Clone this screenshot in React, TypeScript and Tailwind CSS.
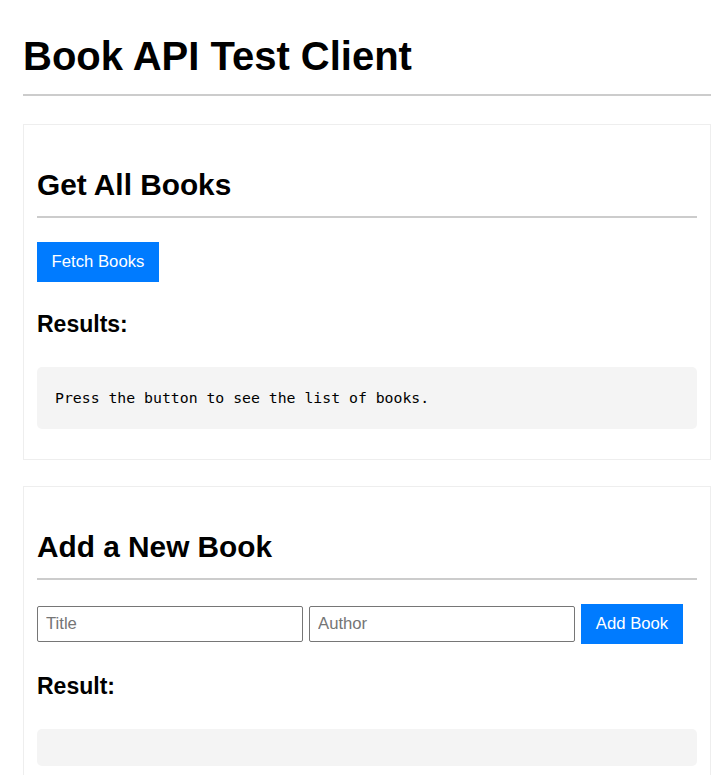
export default function App() {
  return (
    <div className="min-h-screen bg-white pt-[34px] pl-[23px] pr-[6px] text-black font-['Liberation_Sans',Arial,sans-serif]">
      <h1 className="text-[40px] leading-[44px] font-bold pb-[16px] border-b-2 border-[#ccc]">
        Book API Test Client
      </h1>

      <section className="mt-[28px] border border-[#eee] px-[13px] pt-[44px] pb-[30px]">
        <h2 className="text-[29.8px] leading-[32px] font-bold pb-[15px] border-b-2 border-[#ccc]">
          Get All Books
        </h2>
        <button className="mt-[24px] h-[40px] w-[122px] bg-[#007bff] text-white text-[16.7px]">
          Fetch Books
        </button>
        <h3 className="mt-[29px] text-[23px] leading-[26px] font-bold">Results:</h3>
        <pre className="mt-[30px] bg-[#f4f4f4] rounded-[5px] px-[18px] py-[22px] text-[14.8px] leading-[18px] font-['DejaVu_Sans_Mono',monospace]">
          Press the button to see the list of books.
        </pre>
      </section>

      <section className="mt-[26px] border border-[#eee] px-[13px] pt-[44px] pb-[30px]">
        <h2 className="text-[29.8px] leading-[32px] font-bold pb-[15px] border-b-2 border-[#ccc]">
          Add a New Book
        </h2>
        <div className="mt-[24px] flex items-center gap-[6px]">
          <input
            placeholder="Title"
            className="w-[266px] h-[36px] border border-[#767676] rounded-[2px] px-[8px] text-[16.7px] placeholder:text-[#757575] outline-none"
          />
          <input
            placeholder="Author"
            className="w-[266px] h-[36px] border border-[#767676] rounded-[2px] px-[8px] text-[16.7px] placeholder:text-[#757575] outline-none"
          />
          <button className="h-[40px] w-[102px] bg-[#007bff] text-white text-[16.7px]">
            Add Book
          </button>
        </div>
        <h3 className="mt-[29px] text-[23px] leading-[26px] font-bold">Result:</h3>
        <pre className="mt-[30px] h-[37px] bg-[#f4f4f4] rounded-[5px]"></pre>
      </section>
    </div>
  );
}
